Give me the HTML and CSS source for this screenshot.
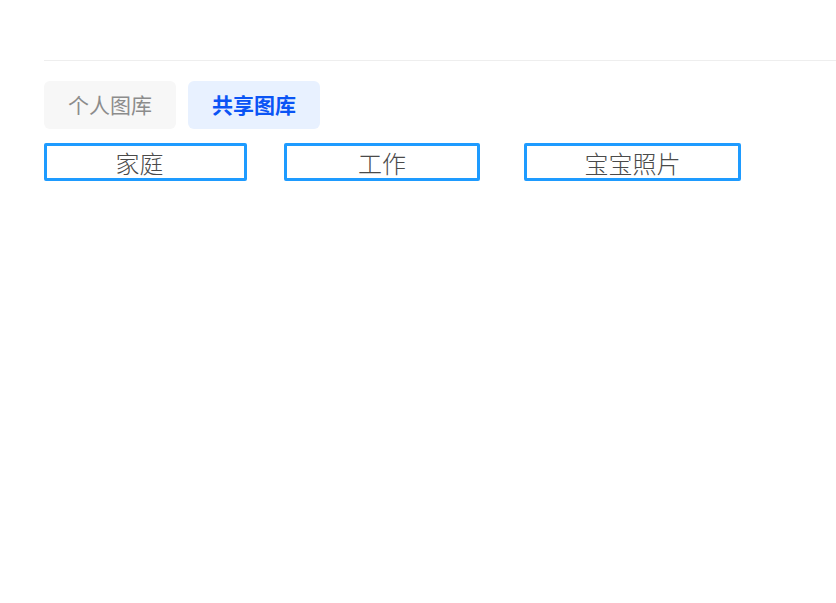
FILE: index.html
```html
<!DOCTYPE html>
<html lang="zh-CN">
<head>
<meta charset="utf-8">
<link rel="stylesheet" href="styles.css">
</head>
<body>
<div class="page">
  <div class="divider"></div>
  <div class="tabs">
    <div class="tab">个人图库</div>
    <div class="tab active">共享图库</div>
  </div>
  <div class="albums">
    <div class="album a1">家庭</div>
    <div class="album a2">工作</div>
    <div class="album a3">宝宝照片</div>
  </div>
</div>
</body>
</html>
```

FILE: styles.css
```css
html, body {
  margin: 0;
  padding: 0;
  background: #ffffff;
}
.page {
  padding: 60px 0 0 44px;
  font-family: "Noto Sans CJK SC", "Noto Sans", sans-serif;
}
.divider {
  height: 1px;
  background: #eeeeee;
}
.tabs {
  display: flex;
  gap: 12px;
  margin-top: 20px;
}
.tab {
  width: 132px;
  height: 48px;
  box-sizing: border-box;
  padding-bottom: 3px;
  border-radius: 6px;
  background: #f7f7f7;
  color: #8c8c8c;
  font-size: 21px;
  line-height: 24px;
  display: flex;
  align-items: center;
  justify-content: center;
}
.tab.active {
  background: #e8f1ff;
  color: #0a54f5;
  font-weight: 700;
}
.albums {
  display: flex;
  margin-top: 14px;
}
.album {
  box-sizing: border-box;
  height: 38px;
  border: 3px solid #1e9bff;
  border-radius: 2px;
  color: #4a4a4a;
  font-size: 24px;
  font-weight: 300;
  line-height: 32px;
  padding-top: 2px;
  display: flex;
  align-items: center;
  justify-content: center;
}
.a1 { width: 203px; padding-right: 12px; }
.a2 { width: 196px; margin-left: 37px; }
.a3 { width: 217px; margin-left: 44px; }
```
